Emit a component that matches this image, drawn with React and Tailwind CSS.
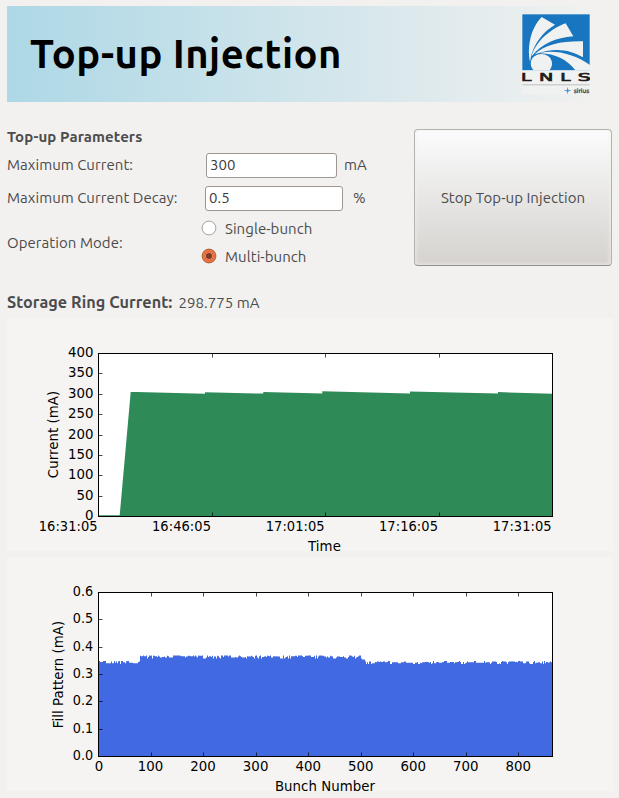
import React from "react";

const UI_FONT = "font-['Ubuntu','Noto_Sans',sans-serif]";

function Logo() {
  return (
    <svg viewBox="66 41 204 240" className="mt-2 h-[80px] w-[68px]" role="img" aria-label="LNLS Sirius">
      <rect x="66" y="41" width="204" height="240" fill="#f0f1f1" />
      <rect x="67" y="42" width="202" height="167.500" fill="#1776bf" />
      <g fill="#f0f1f1">
        <path d="M125 50L165 73C133 92 98 128 90 184C82 148 88 88 125 50Z" />
        <path d="M197 69L220 108C168 112 125 130 95 168C104 130 145 88 197 69Z" />
        <path d="M249 123V171C208 148 165 140 104 162C135 132 185 122 249 123Z" />
        <path d="M122 157C170 148 225 162 270 194V210H226C200 176 165 161 122 159Z" />
        <path d="M101 210C84 193 92 162 124 161C156 162 164 193 148 210Z" />
      </g>
      <g fontFamily="'DejaVu Sans', sans-serif" fontSize="33" fill="#1c1c1c" stroke="#1c1c1c" strokeWidth="2">
        <text x="63" y="242.500" textLength="31" lengthAdjust="spacingAndGlyphs">L</text>
        <text x="117" y="242.500" textLength="43" lengthAdjust="spacingAndGlyphs">N</text>
        <text x="181" y="242.500" textLength="31" lengthAdjust="spacingAndGlyphs">L</text>
        <text x="233" y="242.500" textLength="39" lengthAdjust="spacingAndGlyphs">S</text>
      </g>
      <path d="M67 253.500H269" stroke="#b4b4b4" strokeWidth="2.500" />
      <path d="M203 260L205 269L215 271L205 273L203 282L201 273L190 271L201 269Z" fill="#3b8ccb" />
      <text x="221" y="278" fontFamily="'DejaVu Sans', sans-serif" fontSize="18" fill="#222" stroke="#222" strokeWidth="0.6" textLength="47" lengthAdjust="spacingAndGlyphs">sirius</text>
    </svg>
  );
}

function Radio({ label, checked }) {
  return (
    <label className="flex h-7 items-center">
      <svg viewBox="0 0 16 16" className="mb-0.5 h-4 w-4">
        <circle cx="8" cy="8" r="6.900" fill={checked ? "#ee7443" : "#fff"} stroke={checked ? "#a8522f" : "#9a9793"} strokeWidth="0.9" />
        {checked && <circle cx="8" cy="8" r="4.400" fill="#f08457" stroke="#d0633a" strokeWidth="0.7" />}
        {checked && <circle cx="8" cy="8" r="3" fill="#7a3b26" />}
      </svg>
      <span className="ml-2">{label}</span>
    </label>
  );
}

const PLOT = { left: 98.5, right: 552.5 };

function Axes({ top, bottom, xTicks, yTicks }) {
  return (
    <g fill="none" stroke="#000">
      <rect x={PLOT.left} y={top} width={PLOT.right - PLOT.left} height={bottom - top} />
      <g strokeWidth="1" strokeOpacity="0.7">
        {xTicks.map((x) => (
          <path key={x} d={`M${x} ${top}v4M${x} ${bottom}v-4`} />
        ))}
        {yTicks.map((y) => (
          <path key={y} d={`M${PLOT.left} ${y}h4`} />
        ))}
      </g>
    </g>
  );
}

const snap = (v) => Math.floor(v) + 0.5;

function CurrentChart() {
  const values = [400, 350, 300, 250, 200, 150, 100, 50, 0];
  const yOf = (v) => 516.5 - (v / 400) * 163;
  const times = ["16:31:05", "16:46:05", "17:01:05", "17:16:05", "17:31:05"];
  const xs = [98.5, 212.5, 325.5, 439.5, 552.5];
  return (
    <svg viewBox="7 318 606 233" className="block h-[233px] w-[606px] bg-[#f5f4f3]" fontFamily="'DejaVu Sans', sans-serif" fontSize="13.333">
      <rect x="98.5" y="353.5" width="454" height="163" fill="#fff" />
      <path
        fill="#2e8b57"
        d="M98.5 516.500V515.300H119.700L130.700 392H137L205 393.700V392.200L263.300 393.600V392.100L322.300 393.600V391.300L410 393.600V391.400L498 393.600V392.100L552.500 393.700V516.500Z"
      />
      <Axes top={353.5} bottom={516.5} xTicks={xs.slice(1, 4)} yTicks={values.slice(1, 8).map((v) => snap(yOf(v)))} />
      <g textAnchor="end">
        {values.map((v) => (
          <text key={v} x="93.600" y={Math.round(yOf(v) + 3.6)}>{v}</text>
        ))}
        {times.map((t, i) => (
          <text key={t} x={xs[i] - (i === 1 || i === 3 ? 1.5 : 0.8)} y="531" textLength="59" lengthAdjust="spacingAndGlyphs">{t}</text>
        ))}
      </g>
      <text x="324.500" y="551" textAnchor="middle">Time</text>
      <text transform="translate(58 434.500) rotate(-90)" textAnchor="middle">Current (mA)</text>
    </svg>
  );
}

function fillPath() {
  let d = "M98.5 756.5";
  let seed = 17;
  let level = 0;
  for (let x = 99; x < 553; x++) {
    seed = (seed * 16807) % 2147483647;
    const r = seed / 2147483647;
    if (r < 0.7) level = [0, 0.4, 0.8, 1.2, 1.6, 2.2, 3][Math.floor(r * 10)];
    const base = x < 140 || x > 365 ? 661.1 : x > 361 ? 658.3 : 655.4;
    const y = base + level;
    d += `L${x} ${y.toFixed(1)}H${x + 1}`;
  }
  return d + "V756.5Z";
}

function FillChart() {
  const values = ["0.6", "0.5", "0.4", "0.3", "0.2", "0.1", "0.0"];
  const yOf = (i) => 592.5 + (i * 164) / 6;
  const bunches = [0, 100, 200, 300, 400, 500, 600, 700, 800];
  const xOf = (b) => 98.5 + (b * 454) / 864;
  return (
    <svg viewBox="7 557 606 234" className="mt-1.5 block h-[234px] w-[606px] bg-[#f5f4f3]" fontFamily="'DejaVu Sans', sans-serif" fontSize="13.333">
      <rect x="98.5" y="592.5" width="454" height="164" fill="#fff" />
      <path fill="#4169e1" d={fillPath()} />
      <Axes top={592.5} bottom={756.5} xTicks={bunches.slice(1).map((b) => snap(xOf(b)))} yTicks={[1, 2, 3, 4, 5].map((i) => snap(yOf(i)))} />
      {values.map((v, i) => (
        <text key={v} x="93.300" y={Math.round(yOf(i) + 3.6)} textAnchor="end" textLength="20.500" lengthAdjust="spacingAndGlyphs">{v}</text>
      ))}
      {bunches.map((b) => (
        <text key={b} x={xOf(b) - (b === 0 ? -0.5 : 0.5)} y="771" textAnchor="middle">{b}</text>
      ))}
      <text x="325" y="791" textAnchor="middle">Bunch Number</text>
      <text transform="translate(63 674.500) rotate(-90)" textAnchor="middle">Fill Pattern (mA)</text>
    </svg>
  );
}

export default function App() {
  return (
    <main className={`h-[798px] w-[619px] overflow-hidden bg-[#f2f1f0] pl-[7px] pt-1.5 text-[15px] leading-5 tracking-[0.05px] text-[#4c4c4c] ${UI_FONT}`}>
      <header className="flex h-24 w-[605px] justify-between bg-linear-to-r from-[#add8e6] to-[#f2f1f0] to-[98%] pl-[23px] pr-[22px]">
        <h1 className="whitespace-nowrap text-[40px] font-bold leading-[95px] tracking-[0.45px] text-black">Top-up Injection</h1>
        <Logo />
      </header>

      <section className="mt-[25px] flex h-36 w-[605px] justify-between">
        <div className="w-[380px]">
          <h2 className="h-[22px] font-bold tracking-[0.1px]">Top-up Parameters</h2>
          <div className="flex h-8 items-center">
            <span className="w-[199px] whitespace-nowrap">Maximum Current:</span>
            <input readOnly value="300" className="h-[25px] w-[131px] rounded-[3px] border border-[#9c9791] bg-white px-[3px] pb-0.5 text-[#3c3c3c]" />
            <span className="ml-[7px]">mA</span>
          </div>
          <div className="mt-px flex h-8 items-center">
            <span className="w-[198px] whitespace-nowrap">Maximum Current Decay:</span>
            <input readOnly value="0.5" className="h-[25px] w-[138px] rounded-[3px] border border-[#9c9791] bg-white px-[3px] pb-0.5 text-[#3c3c3c]" />
            <span className="ml-[10px]">%</span>
          </div>
          <div className="mt-px flex items-center">
            <span className="w-[194px] whitespace-nowrap">Operation Mode:</span>
            <div>
              <Radio label="Single-bunch" />
              <Radio label="Multi-bunch" checked />
            </div>
          </div>
        </div>
        <button className="mt-0.5 h-[137px] w-[198px] rounded-[4px] border border-[#b5b2ae] border-b-[#929090] bg-linear-to-b from-[#fcfcfc] via-[#e8e7e6] to-[#d5d2ce] shadow-[inset_0_0_5px_#f2f1f0]">
          Stop Top-up Injection
        </button>
      </section>

      <div className="mt-[21px] flex h-[26px] items-baseline">
        <strong className="whitespace-nowrap text-[16.2px]">Storage Ring Current:</strong>
        <span className="ml-1.5 whitespace-nowrap">298.775 mA</span>
      </div>

      <CurrentChart />
      <FillChart />
    </main>
  );
}
